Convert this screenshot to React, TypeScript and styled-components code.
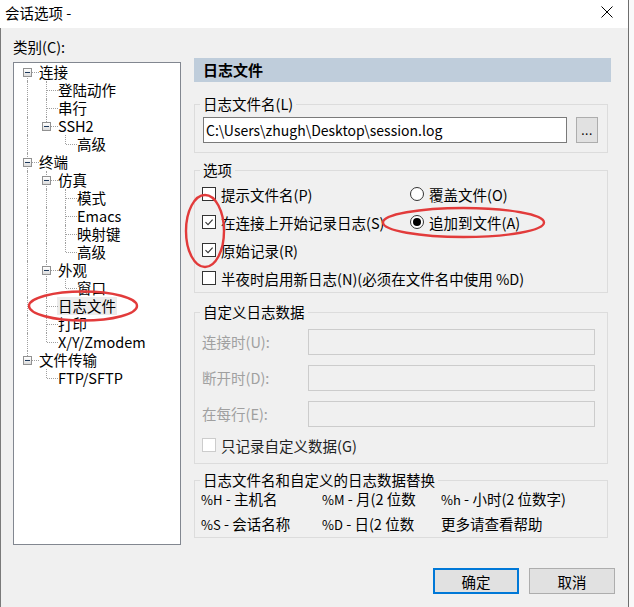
import React from "react";
import styled, { createGlobalStyle } from "styled-components";

const GlobalStyle = createGlobalStyle`
  html, body {
    margin: 0;
    padding: 0;
    background: #f9f9f9;
  }
  body {
    font-family: "Noto Sans CJK SC", "Noto Sans", sans-serif;
    font-size: 14.5px;
    color: #000;
  }
  #root {
    position: relative;
    width: 634px;
    height: 607px;
    overflow: hidden;
  }
`;

const Window = styled.div`
  width: 629px;
  height: 607px;
  box-sizing: border-box;
  border-right: 1px solid #6e6e6e;
  display: flex;
  flex-direction: column;
`;

const TitleBar = styled.div`
  height: 28px;
  flex: none;
  background: #fff;
  display: flex;
  align-items: center;
  justify-content: space-between;
  padding-left: 5px;
`;

const Title = styled.span`
  line-height: 28px;
  margin-top: -2px;
`;

const CloseBtn = styled.div`
  width: 42px;
  height: 28px;
  display: flex;
  align-items: center;
  justify-content: center;
  margin-top: -4px;
`;

const Body = styled.div`
  flex: 1;
  background: #f0f0f0;
  border-left: 1px solid #7a7a7a;
  padding: 8px 13px 13px 12px;
  display: flex;
  flex-direction: column;
`;

const CategoryLabel = styled.div`
  line-height: 21px;
  height: 21px;
`;

const Main = styled.div`
  display: flex;
  align-items: flex-start;
  gap: 13px;
`;

/* ---------- tree ---------- */

const TreeBox = styled.div`
  width: 168px;
  height: 483px;
  margin-top: 5px;
  box-sizing: border-box;
  border: 1px solid #828790;
  background: #fff;
  padding-left: 4px;
`;

const TreeRow = styled.div`
  display: flex;
  height: 18px;
  line-height: 18px;
`;

const Cell = styled.div<{ $line?: boolean }>`
  position: relative;
  width: 19px;
  height: 18px;
  flex: none;
  &::before {
    content: "";
    display: ${(p) => (p.$line ? "block" : "none")};
    position: absolute;
    left: 9px;
    top: 0;
    bottom: 0;
    border-left: 1px dotted #a0a0a0;
  }
`;

const Connector = styled.div<{ $first?: boolean; $last?: boolean }>`
  position: relative;
  width: 19px;
  height: 18px;
  flex: none;
  &::before {
    content: "";
    position: absolute;
    left: 9px;
    top: ${(p) => (p.$first ? "9px" : "0")};
    bottom: ${(p) => (p.$last ? "9px" : "0")};
    border-left: 1px dotted #a0a0a0;
  }
  &::after {
    content: "";
    position: absolute;
    left: 10px;
    right: -2px;
    top: 9px;
    border-top: 1px dotted #a0a0a0;
  }
`;

const Expander = styled.div`
  position: absolute;
  z-index: 1;
  left: 5px;
  top: 5px;
  width: 9px;
  height: 9px;
  box-sizing: border-box;
  border: 1px solid #919191;
  background: linear-gradient(#ffffff, #dcdcdc);
  &::after {
    content: "";
    position: absolute;
    left: 1px;
    top: 3px;
    width: 5px;
    height: 1px;
    background: #1e395b;
  }
`;

const TreeLabel = styled.span<{ $selected?: boolean }>`
  display: inline-block;
  height: 18px;
  line-height: 18px;
  margin-left: ${(p) => (p.$selected ? "1px" : "2px")};
  padding: ${(p) => (p.$selected ? "0 1px" : "0")};
  white-space: nowrap;
  background: ${(p) => (p.$selected ? "#ececec" : "transparent")};
`;

type TreeNode = { label: string; children?: TreeNode[]; selected?: boolean };

type FlatRow = {
  label: string;
  guides: boolean[];
  first: boolean;
  last: boolean;
  expandable: boolean;
  selected?: boolean;
};

const tree: TreeNode[] = [
  {
    label: "连接",
    children: [
      { label: "登陆动作" },
      { label: "串行" },
      { label: "SSH2", children: [{ label: "高级" }] },
    ],
  },
  {
    label: "终端",
    children: [
      {
        label: "仿真",
        children: [
          { label: "模式" },
          { label: "Emacs" },
          { label: "映射键" },
          { label: "高级" },
        ],
      },
      { label: "外观", children: [{ label: "窗口" }] },
      { label: "日志文件", selected: true },
      { label: "打印" },
      { label: "X/Y/Zmodem" },
    ],
  },
  { label: "文件传输", children: [{ label: "FTP/SFTP" }] },
];

function flatten(nodes: TreeNode[], guides: boolean[] = [], out: FlatRow[] = []) {
  nodes.forEach((n, i) => {
    const last = i === nodes.length - 1;
    out.push({
      label: n.label,
      guides,
      first: guides.length === 0 && i === 0,
      last,
      expandable: !!n.children,
      selected: n.selected,
    });
    if (n.children) flatten(n.children, [...guides, !last], out);
  });
  return out;
}

const rows = flatten(tree);

/* ---------- right panel ---------- */

const RightPanel = styled.div`
  width: 417px;
  margin-top: 1px;
  display: flex;
  flex-direction: column;
`;

const PageHeader = styled.div`
  height: 24px;
  line-height: 24px;
  background: #bfcddb;
  padding-left: 9px;
  font-weight: bold;
  font-size: 15px;
`;

const Group = styled.fieldset<{ $gap: number }>`
  width: 414px;
  box-sizing: border-box;
  margin: ${(p) => p.$gap}px 0 0 0;
  padding: 0;
  border: 1px solid #dcdcdc;
  min-width: 0;
`;

const Legend = styled.legend`
  margin-left: 5px;
  padding: 0 3px;
  line-height: 18px;
  height: 18px;
`;

const FileRow = styled.div`
  display: flex;
  gap: 9px;
  padding: 4px 9px 9px 8px;
`;

const TextBox = styled.div<{ $disabled?: boolean }>`
  height: 26px;
  box-sizing: border-box;
  border: 1px solid ${(p) => (p.$disabled ? "#cccccc" : "#7a7a7a")};
  background: ${(p) => (p.$disabled ? "#f0f0f0" : "#fff")};
  padding-left: 2px;
  line-height: 24px;
  font-size: 14px;
  flex: 1;
  white-space: nowrap;
`;

const BrowseButton = styled.div`
  width: 22px;
  height: 26px;
  box-sizing: border-box;
  border: 1px solid #adadad;
  background: #e1e1e1;
  text-align: center;
  line-height: 24px;
  font-size: 12px;
  letter-spacing: 0.5px;
`;

const OptionsGrid = styled.div`
  display: grid;
  grid-template-columns: 208px 1fr;
  grid-auto-rows: 28px;
  padding: 1px 0 0 7px;
`;

const Choice = styled.div<{ $span?: boolean; $muted?: boolean }>`
  display: flex;
  align-items: center;
  gap: 5px;
  white-space: nowrap;
  color: ${(p) => (p.$muted ? "#222" : "#000")};
  grid-column: ${(p) => (p.$span ? "1 / span 2" : "auto")};
`;

const Box = styled.div<{ $disabled?: boolean }>`
  width: 14px;
  height: 14px;
  flex: none;
  box-sizing: border-box;
  border: 1px solid ${(p) => (p.$disabled ? "#cccccc" : "#333")};
  background: #fff;
  display: flex;
  align-items: center;
  justify-content: center;
`;

const Radio = styled.div<{ $on?: boolean }>`
  width: 14px;
  height: 14px;
  flex: none;
  box-sizing: border-box;
  border: 1px solid #333;
  border-radius: 50%;
  background: #fff;
  display: flex;
  align-items: center;
  justify-content: center;
  &::after {
    content: "";
    display: ${(p) => (p.$on ? "block" : "none")};
    width: 8px;
    height: 8px;
    border-radius: 50%;
    background: #000;
  }
`;

const CustomBody = styled.div`
  padding: 7px 12px 4px 7px;
`;

const FieldGrid = styled.div`
  display: grid;
  grid-template-columns: 106px 1fr;
  grid-auto-rows: 27px;
  row-gap: 9px;
  align-items: center;
`;

const FieldLabel = styled.span`
  color: #a0a0a0;
  white-space: nowrap;
`;

const OnlyRow = styled(Choice)`
  height: 28px;
  margin-top: 4px;
`;

const SubstGrid = styled.div`
  display: grid;
  grid-template-columns: 121px 119px 1fr;
  grid-auto-rows: 20px;
  row-gap: 5px;
  line-height: 20px;
  padding: 0 0 3px 6px;
  white-space: nowrap;
`;

const Code = styled.span`
  font-size: 13px;
`;

const ButtonRow = styled.div`
  margin-top: auto;
  display: flex;
  justify-content: flex-end;
  gap: 10px;
`;

const DialogButton = styled.div<{ $default?: boolean }>`
  width: 86px;
  height: 26px;
  box-sizing: border-box;
  border: ${(p) => (p.$default ? "2px solid #0078d7" : "1px solid #adadad")};
  background: #e1e1e1;
  display: flex;
  align-items: center;
  justify-content: center;
`;

const Marks = styled.svg`
  position: absolute;
  left: 0;
  top: 0;
  pointer-events: none;
`;

function Check() {
  return (
    <svg width="10" height="10" viewBox="0 0 10 10">
      <path d="M1.5 5.2 L4 7.6 L8.6 2.6" fill="none" stroke="#333" strokeWidth="1.1" />
    </svg>
  );
}

function CheckItem({ label, checked, span }: { label: string; checked?: boolean; span?: boolean }) {
  return (
    <Choice $span={span}>
      <Box>{checked && <Check />}</Box>
      <span>{label}</span>
    </Choice>
  );
}

function RadioItem({ label, on }: { label: string; on?: boolean }) {
  return (
    <Choice>
      <Radio $on={on} />
      <span>{label}</span>
    </Choice>
  );
}

const subst: [string, string][] = [
  ["%H", " - 主机名"],
  ["%M", " - 月(2 位数"],
  ["%h", " - 小时(2 位数字)"],
  ["%S", " - 会话名称"],
  ["%D", " - 日(2 位数"],
  ["", "更多请查看帮助"],
];

export default function App() {
  return (
    <>
      <GlobalStyle />
      <Window>
        <TitleBar>
          <Title>会话选项 -</Title>
          <CloseBtn>
            <svg width="12" height="12" viewBox="0 0 12 12">
              <path d="M0.5 0.5 L11.5 11.5 M11.5 0.5 L0.5 11.5" stroke="#000" strokeWidth="1" />
            </svg>
          </CloseBtn>
        </TitleBar>
        <Body>
          <CategoryLabel>类别(C):</CategoryLabel>
          <Main>
            <TreeBox>
              {rows.map((r, i) => (
                <TreeRow key={i}>
                  {r.guides.map((g, j) => (
                    <Cell key={j} $line={g} />
                  ))}
                  <Connector $first={r.first} $last={r.last}>
                    {r.expandable && <Expander />}
                  </Connector>
                  <TreeLabel $selected={r.selected}>{r.label}</TreeLabel>
                </TreeRow>
              ))}
            </TreeBox>
            <RightPanel>
              <PageHeader>日志文件</PageHeader>

              <Group $gap={13}>
                <Legend>日志文件名(L)</Legend>
                <FileRow>
                  <TextBox>C:\Users\zhugh\Desktop\session.log</TextBox>
                  <BrowseButton>...</BrowseButton>
                </FileRow>
              </Group>

              <Group $gap={8}>
                <Legend>选项</Legend>
                <OptionsGrid>
                  <CheckItem label="提示文件名(P)" />
                  <RadioItem label="覆盖文件(O)" />
                  <CheckItem label="在连接上开始记录日志(S)" checked />
                  <RadioItem label="追加到文件(A)" on />
                  <CheckItem label="原始记录(R)" checked span />
                  <CheckItem label="半夜时启用新日志(N)(必须在文件名中使用 %D)" span />
                </OptionsGrid>
              </Group>

              <Group $gap={10}>
                <Legend>自定义日志数据</Legend>
                <CustomBody>
                  <FieldGrid>
                    <FieldLabel>连接时(U):</FieldLabel>
                    <TextBox $disabled />
                    <FieldLabel>断开时(D):</FieldLabel>
                    <TextBox $disabled />
                    <FieldLabel>在每行(E):</FieldLabel>
                    <TextBox $disabled />
                  </FieldGrid>
                  <OnlyRow $muted>
                    <Box $disabled />
                    <span>只记录自定义数据(G)</span>
                  </OnlyRow>
                </CustomBody>
              </Group>

              <Group $gap={7}>
                <Legend>日志文件名和自定义的日志数据替换</Legend>
                <SubstGrid>
                  {subst.map(([code, text], i) => (
                    <span key={i}>
                      {code && <Code>{code}</Code>}
                      {text}
                    </span>
                  ))}
                </SubstGrid>
              </Group>
            </RightPanel>
          </Main>
          <ButtonRow>
            <DialogButton $default>确定</DialogButton>
            <DialogButton>取消</DialogButton>
          </ButtonRow>
        </Body>
      </Window>
      <Marks width="634" height="607">
        <g fill="none" stroke="#e23b3b" strokeWidth="2.4">
          <ellipse cx="83" cy="306" rx="54" ry="14.5" />
          <ellipse cx="205" cy="231" rx="19" ry="36" />
          <ellipse cx="463.5" cy="222.5" rx="80.5" ry="14.5" />
        </g>
      </Marks>
    </>
  );
}
